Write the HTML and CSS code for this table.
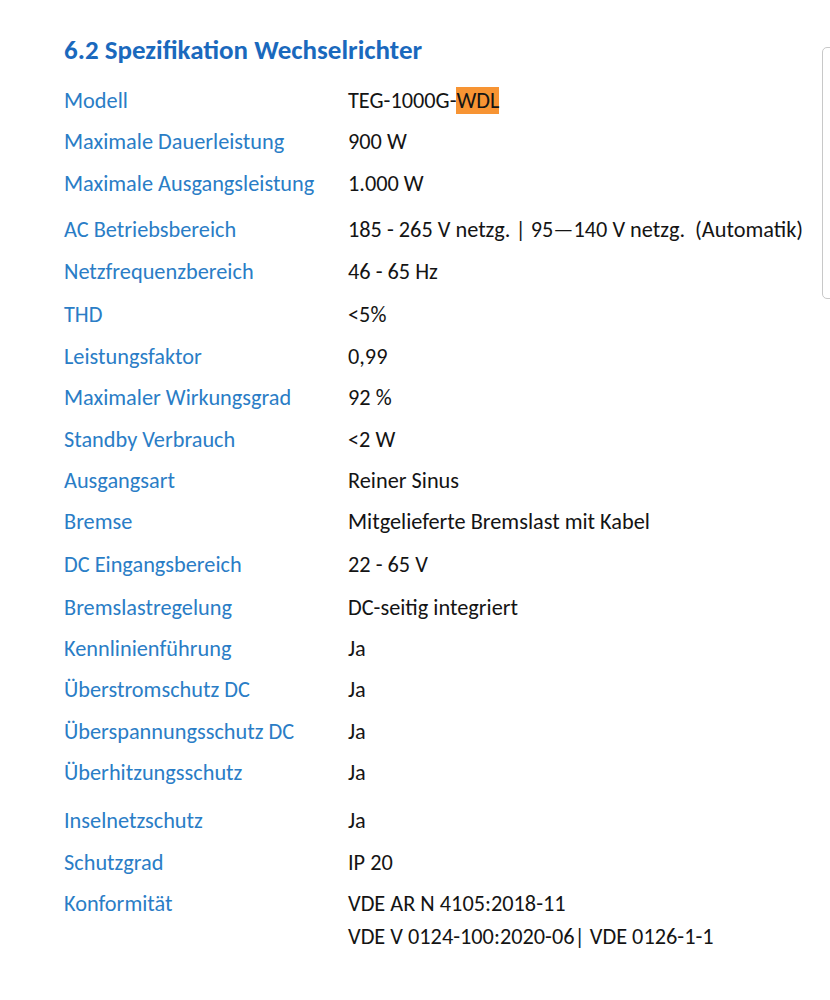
FILE: index.html
```html
<!DOCTYPE html>
<html lang="de">
<head>
<meta charset="utf-8">
<title>6.2 Spezifikation Wechselrichter</title>
<link rel="stylesheet" href="styles.css">
</head>
<body>
<div class="page">
  <h1 class="title">6.2 Spezifikation Wechselrichter</h1>
  <div class="spec">
    <div class="row"><span class="label">Modell</span><span class="value">TEG-1000G-<mark class="hl">WDL</mark></span></div>
    <div class="row"><span class="label">Maximale Dauerleistung</span><span class="value">900 W</span></div>
    <div class="row"><span class="label">Maximale Ausgangsleistung</span><span class="value">1.000 W</span></div>
    <div class="row gap-ac"><span class="label">AC Betriebsbereich</span><span class="value">185 - 265 V netzg. | 95—140 V netzg.&nbsp; (Automatik)</span></div>
    <div class="row"><span class="label">Netzfrequenzbereich</span><span class="value">46 - 65 Hz</span></div>
    <div class="row gap-thd"><span class="label">THD</span><span class="value">&lt;5%</span></div>
    <div class="row"><span class="label">Leistungsfaktor</span><span class="value">0,99</span></div>
    <div class="row"><span class="label">Maximaler Wirkungsgrad</span><span class="value">92 %</span></div>
    <div class="row"><span class="label">Standby Verbrauch</span><span class="value">&lt;2 W</span></div>
    <div class="row"><span class="label">Ausgangsart</span><span class="value">Reiner Sinus</span></div>
    <div class="row"><span class="label">Bremse</span><span class="value">Mitgelieferte Bremslast mit Kabel</span></div>
    <div class="row gap-xs"><span class="label">DC Eingangsbereich</span><span class="value">22 - 65 V</span></div>
    <div class="row gap-sm"><span class="label">Bremslastregelung</span><span class="value">DC-seitig integriert</span></div>
    <div class="row"><span class="label">Kennlinienführung</span><span class="value">Ja</span></div>
    <div class="row"><span class="label">Überstromschutz DC</span><span class="value">Ja</span></div>
    <div class="row"><span class="label">Überspannungsschutz DC</span><span class="value">Ja</span></div>
    <div class="row"><span class="label">Überhitzungsschutz</span><span class="value">Ja</span></div>
    <div class="row gap-lg"><span class="label">Inselnetzschutz</span><span class="value">Ja</span></div>
    <div class="row"><span class="label">Schutzgrad</span><span class="value">IP 20</span></div>
    <div class="row"><span class="label">Konformität</span><span class="value multi"><span>VDE AR N 4105:2018-11</span><span>VDE V 0124-100:2020-06| VDE 0126-1-1</span></span></div>
  </div>
</div>
<div class="scroll-thumb"></div>
</body>
</html>
```
FILE: styles.css
```css
html, body {
  margin: 0;
  padding: 0;
  background: #ffffff;
}
body {
  font-family: Carlito, "Open Sans", "Liberation Sans", sans-serif;
  width: 830px;
  height: 1000px;
  overflow: hidden;
  position: relative;
}
.page {
  padding: 34px 0 0 64px;
}
.title {
  margin: 0;
  font-size: 27px;
  font-weight: 700;
  color: #1a69bd;
  line-height: 32px;
}
.spec {
  margin-top: 21px;
  display: flex;
  flex-direction: column;
}
.row {
  display: grid;
  grid-template-columns: 284px auto;
  height: 41.4px;
  align-items: start;
  font-size: 22.3px;
  line-height: 28px;
}
.row.gap-ac { margin-top: 5px; }
.row.gap-thd { margin-top: 2.5px; }
.row.gap-xs { margin-top: 1px; }
.row.gap-sm { margin-top: 1.5px; }
.row.gap-lg { margin-top: 6.5px; }
.label {
  color: #2a7dc6;
}
.value {
  color: #141414;
}
.value.multi {
  display: flex;
  flex-direction: column;
  row-gap: 5px;
}
.hl {
  background: #f79433;
  color: #141414;
  padding: 0;
}
.scroll-thumb {
  position: absolute;
  left: 822px;
  top: 47px;
  width: 14px;
  height: 252px;
  border: 1px solid #c8c8c8;
  border-radius: 5px;
  box-sizing: border-box;
  background: #fff;
}
```
